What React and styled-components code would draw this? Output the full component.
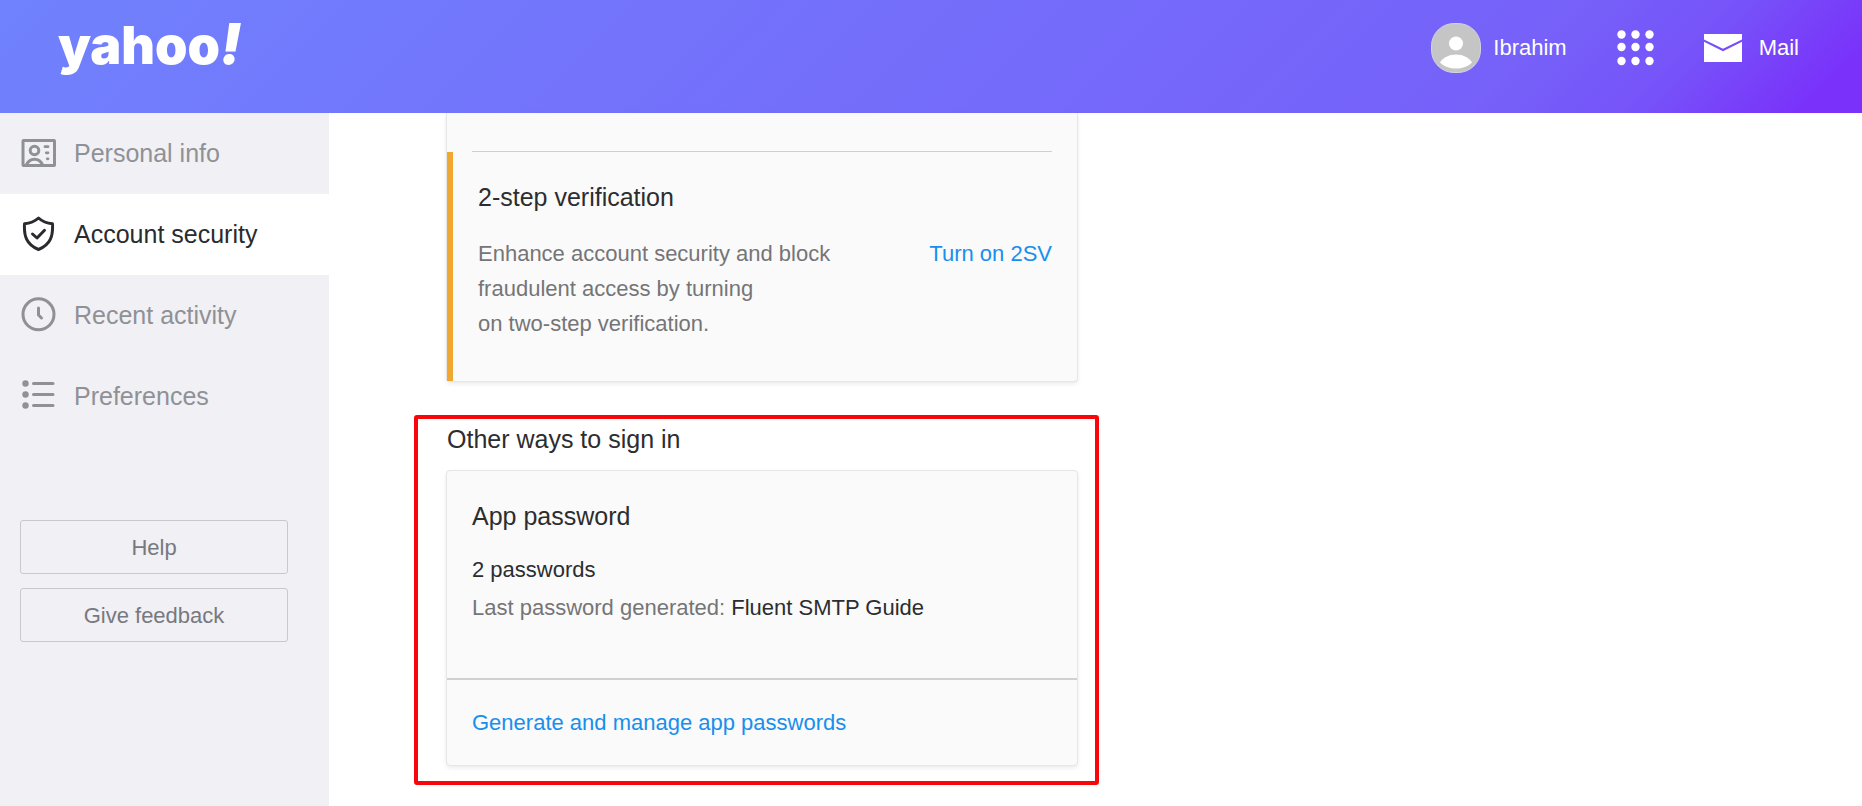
import React from "react";
import styled, { createGlobalStyle } from "styled-components";

const GlobalStyle = createGlobalStyle`
  *, *::before, *::after { box-sizing: border-box; }
  body {
    margin: 0;
    background: #fff;
    color: #2c2d2f;
    font-family: "Liberation Sans", Arial, sans-serif;
    font-size: 22px;
    line-height: 35px;
  }
  h2, h3, p, ul { margin: 0; padding: 0; }
  a { color: inherit; text-decoration: none; }
  svg { display: block; flex: none; }
`;

const Page = styled.div`
  display: flex;
  flex-direction: column;
  min-height: 100vh;
`;

const Header = styled.header`
  display: flex;
  align-items: center;
  justify-content: space-between;
  height: 113px;
  padding: 0 63px 17px 58px;
  color: #fff;
  background: linear-gradient(135deg, #7082fd 0%, #746ffb 45%, #7661f9 80%, #7654f9 88%, #7a31fa 97%, #7a31fa 100%);
`;

const Logo = styled.a`
  padding-bottom: 6px;
  font-family: Inter, "Liberation Sans", sans-serif;
  font-size: 52px;
  font-weight: 900;
  line-height: 60px;
`;

const Bang = styled.span`
  font-size: 56px;
  font-style: italic;
`;

const HeaderNav = styled.nav`
  display: flex;
  align-items: center;
  gap: 50px;
`;

const HeaderLink = styled.a`
  display: flex;
  align-items: center;
  gap: ${(p) => p.$gap || 12}px;
`;

const HeaderLabel = styled.span`
  padding-bottom: 2px;
`;

const AppsButton = styled.button`
  padding: 0;
  border: 0;
  background: none;
  color: inherit;
  cursor: pointer;
`;

const Body = styled.div`
  display: flex;
  flex: 1;
`;

const Sidebar = styled.aside`
  flex: none;
  width: 329px;
  background: #f0f0f5;
`;

const NavItem = styled.a`
  display: flex;
  align-items: center;
  gap: 18px;
  height: 81px;
  padding-left: 21px;
  font-size: 25px;
  color: ${(p) => (p.$active ? "#2a2b2e" : "#8f9195")};
  background: ${(p) => (p.$active ? "#fff" : "transparent")};
`;

const SideActions = styled.div`
  display: flex;
  flex-direction: column;
  gap: 14px;
  padding: 83px 41px 40px 20px;
`;

const OutlineButton = styled.button`
  height: 54px;
  border: 1px solid #c7c9ce;
  border-radius: 3px;
  background: transparent;
  color: #77797e;
  font: inherit;
  cursor: pointer;
`;

const Main = styled.main`
  flex: 1;
  max-width: 749px;
  padding-left: 117px;
`;

const Card = styled.section`
  border: 1px solid #e6e6e8;
  border-top-width: ${(p) => (p.$continued ? 0 : 1)}px;
  border-radius: ${(p) => (p.$continued ? "0 0 4px 4px" : "4px")};
  background: #fafafa;
  box-shadow: 0 2px 4px rgba(0, 0, 0, 0.08);
`;

const Rule = styled.hr`
  margin: 0 25px;
  padding-top: 38px;
  border: 0;
  border-bottom: 1px solid #cdcfd1;
`;

const AlertBlock = styled.div`
  padding: 28px 25px 40px;
  border-left: 6px solid #f0a830;
`;

const ItemTitle = styled.h3`
  font-size: 25px;
  font-weight: 400;
  line-height: 35px;
  margin-bottom: ${(p) => p.$space}px;
`;

const AlertRow = styled.div`
  display: flex;
  justify-content: space-between;
  gap: 40px;
  color: #757577;
`;

const ActionLink = styled.a`
  color: #188fec;
  white-space: nowrap;
`;

const OtherWays = styled.div`
  position: relative;
  margin-top: 40px;
`;

const SectionTitle = styled.h2`
  margin-bottom: 13px;
  padding-left: 1px;
  font-size: 25px;
  font-weight: 400;
  line-height: 35px;
`;

const Highlight = styled.div`
  position: absolute;
  inset: -7px -21px -19px -32px;
  border: 4px solid #f9060a;
  border-radius: 3px;
  pointer-events: none;
`;

const CardBody = styled.div`
  display: flex;
  flex-direction: column;
  padding: 28px 25px 53px;
`;

const Generated = styled.p`
  margin-top: 3px;
  color: #757577;
`;

const Name = styled.span`
  color: #2c2d2f;
`;

const CardFooter = styled.div`
  padding: 25px;
  border-top: 2px solid #cfd0d2;
`;

const AvatarIcon = () => (
  <svg width="50" height="50" viewBox="0 0 50 50" aria-hidden="true">
    <rect x="0.5" y="0.5" width="49" height="49" rx="22.5" fill="#c5c5c5" stroke="#d4d3e2" />
    <circle cx="25" cy="20.500" r="7" fill="#fff" />
    <path d="M9 39.500C12 34.500 18 31.500 25 31.500S38 34.500 41 39.500C37 43.500 31 45.500 25 45.500S13 43.500 9 39.500Z" fill="#fff" />
  </svg>
);

const AppsIcon = () => (
  <svg width="37" height="36" viewBox="0 0 37 36" fill="#fff" aria-hidden="true">
    {[4.5, 17, 31].map((y) =>
      [4.5, 18.5, 32.5].map((x) => <circle key={`${x}-${y}`} cx={x} cy={y} r="4.200" />)
    )}
  </svg>
);

const MailIcon = () => (
  <svg width="38" height="28" viewBox="0 0 38 28" fill="#fff" aria-hidden="true">
    <path d="M0 0H38V5.500L19 14.800L0 5.500Z" />
    <path d="M0 7.800L19 17.200L38 7.800V28H0Z" />
  </svg>
);

const NavIcon = ({ children }) => (
  <svg
    width="35"
    height="38"
    viewBox="0 0 35 38"
    fill="none"
    stroke="currentColor"
    strokeWidth="3"
    strokeLinecap="round"
    strokeLinejoin="round"
    aria-hidden="true"
  >
    {children}
  </svg>
);

const IdIcon = () => (
  <NavIcon>
    <rect x="2" y="5.500" width="31.500" height="25" rx="0.500" />
    <circle cx="13.500" cy="15.500" r="4.300" />
    <path d="M5.500 30C7 26 10 24.200 13.500 24.200S20 26 21.500 30" />
    <path d="M24 11.700H27M25.300 17.800H27M26.300 23.800H27" strokeWidth="2.800" />
  </NavIcon>
);

const ShieldIcon = () => (
  <NavIcon>
    <path d="M17.500 2C14 5.200 9 7.300 3.500 7.800C2.900 19.500 5 28.500 17.500 33.500C30 28.500 32.100 19.500 31.500 7.800C26 7.300 21 5.200 17.500 2Z" />
    <path d="M11.500 18L16 22L23.500 14.300" />
  </NavIcon>
);

const ClockIcon = () => (
  <NavIcon>
    <circle cx="17.500" cy="17.300" r="15.500" />
    <path d="M17.500 11V18L20.500 21" />
  </NavIcon>
);

const ListIcon = () => (
  <NavIcon>
    <path d="M12.500 5.500H32M12.500 16.500H32M12.500 27.500H32" />
    <g fill="currentColor" stroke="none">
      <circle cx="4.500" cy="5.500" r="3.200" />
      <circle cx="4.500" cy="16.500" r="3.200" />
      <circle cx="4.500" cy="27.500" r="3.200" />
    </g>
  </NavIcon>
);

const navItems = [
  { label: "Personal info", Icon: IdIcon },
  { label: "Account security", Icon: ShieldIcon, active: true },
  { label: "Recent activity", Icon: ClockIcon },
  { label: "Preferences", Icon: ListIcon },
];

export default function App() {
  return (
    <>
      <GlobalStyle />
      <Page>
        <Header>
          <Logo href="#">
            yahoo<Bang>!</Bang>
          </Logo>
          <HeaderNav>
            <HeaderLink href="#">
              <AvatarIcon />
              <HeaderLabel>Ibrahim</HeaderLabel>
            </HeaderLink>
            <AppsButton type="button" aria-label="Apps">
              <AppsIcon />
            </AppsButton>
            <HeaderLink href="#" $gap={17}>
              <MailIcon />
              <HeaderLabel>Mail</HeaderLabel>
            </HeaderLink>
          </HeaderNav>
        </Header>
        <Body>
          <Sidebar>
            <nav>
              {navItems.map(({ label, Icon, active }) => (
                <NavItem key={label} href="#" $active={active} aria-current={active ? "page" : undefined}>
                  <Icon />
                  {label}
                </NavItem>
              ))}
            </nav>
            <SideActions>
              <OutlineButton type="button">Help</OutlineButton>
              <OutlineButton type="button">Give feedback</OutlineButton>
            </SideActions>
          </Sidebar>
          <Main>
            <Card $continued>
              <Rule />
              <AlertBlock>
                <ItemTitle $space={21}>2-step verification</ItemTitle>
                <AlertRow>
                  <p>
                    Enhance account security and block
                    <br />
                    fraudulent access by turning
                    <br />
                    on two-step verification.
                  </p>
                  <ActionLink href="#">Turn on 2SV</ActionLink>
                </AlertRow>
              </AlertBlock>
            </Card>
            <OtherWays>
              <SectionTitle>Other ways to sign in</SectionTitle>
              <Card>
                <CardBody>
                  <ItemTitle $space={18}>App password</ItemTitle>
                  <p>2 passwords</p>
                  <Generated>
                    Last password generated: <Name>Fluent SMTP Guide</Name>
                  </Generated>
                </CardBody>
                <CardFooter>
                  <ActionLink href="#">Generate and manage app passwords</ActionLink>
                </CardFooter>
              </Card>
              <Highlight />
            </OtherWays>
          </Main>
        </Body>
      </Page>
    </>
  );
}
